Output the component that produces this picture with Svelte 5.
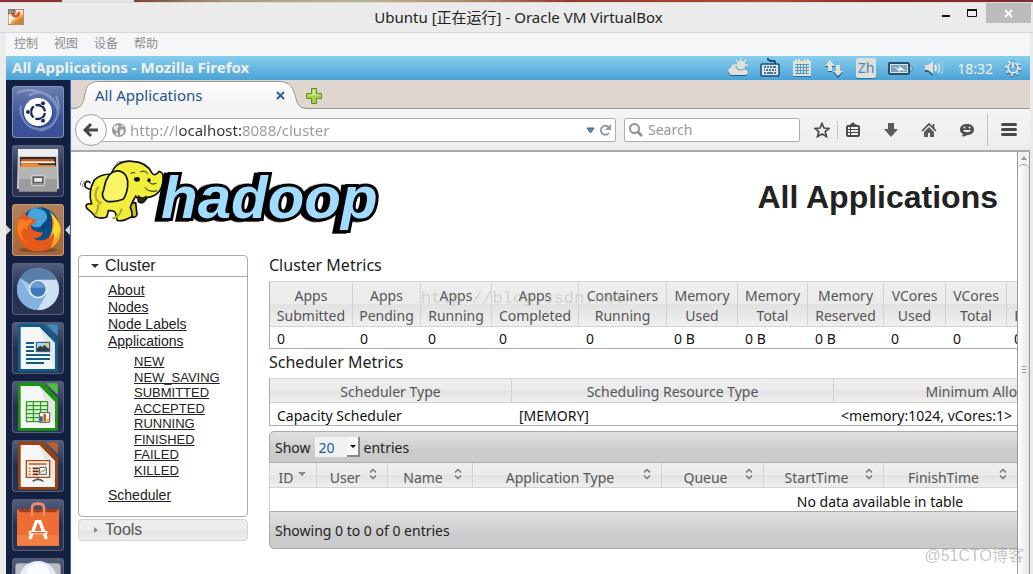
<script>
  const menus = ['控制', '视图', '设备', '帮助'];

  const clusterLinks = ['About', 'Nodes', 'Node Labels', 'Applications'];
  const appStates = ['NEW', 'NEW_SAVING', 'SUBMITTED', 'ACCEPTED', 'RUNNING', 'FINISHED', 'FAILED', 'KILLED'];

  const metrics = [
    { a: 'Apps', b: 'Submitted', v: '0', w: 83 },
    { a: 'Apps', b: 'Pending', v: '0', w: 68 },
    { a: 'Apps', b: 'Running', v: '0', w: 71 },
    { a: 'Apps', b: 'Completed', v: '0', w: 87 },
    { a: 'Containers', b: 'Running', v: '0', w: 88 },
    { a: 'Memory', b: 'Used', v: '0 B', w: 71 },
    { a: 'Memory', b: 'Total', v: '0 B', w: 70 },
    { a: 'Memory', b: 'Reserved', v: '0 B', w: 76 },
    { a: 'VCores', b: 'Used', v: '0', w: 62 },
    { a: 'VCores', b: 'Total', v: '0', w: 61 },
    { a: 'VCores', b: 'Reserved', v: '0', w: 76 }
  ];

  const scheduler = [
    { h: 'Scheduler Type', v: 'Capacity Scheduler', w: 242 },
    { h: 'Scheduling Resource Type', v: '[MEMORY]', w: 322 },
    { h: 'Minimum Allocation', v: '<memory:1024, vCores:1>', w: 316 }
  ];

  const columns = [
    { h: 'ID', w: 47, sorted: true },
    { h: 'User', w: 71 },
    { h: 'Name', w: 85 },
    { h: 'Application Type', w: 189 },
    { h: 'Queue', w: 102 },
    { h: 'StartTime', w: 120 },
    { h: 'FinishTime', w: 134 }
  ];

  let url = $state('http://localhost:8088/cluster');
  let query = $state('');
  let pageSize = $state('20');
</script>

<div class="host">
  <div class="wallpaper"></div>
  <header class="titlebar">
    <svg class="appicon" width="16" height="16" viewBox="0 0 48 48">
      <rect width="48" height="48" fill="#8a6a50" />
      <rect x="2" y="2" width="44" height="44" fill="#f3dcc0" />
      <path d="M2 18h18l4 6-10 20H2z" fill="#fbf3e6" />
      <path d="M8 46c0-12 6-12 14-16s10-12 24-14v12c-8 2-10 8-18 12-4 2-6 2-6 6z" fill="#f0a83a" />
      <path d="M16 46c2-8 14-8 20-18l10-6v24z" fill="#c98443" />
      <path d="M12 14c8 12 18 10 22-4" stroke="#e2501f" stroke-width="8" fill="none" />
      <path d="M2 2h20v12H2z" fill="#4b4640" />
      <path d="M5 5h4v6h-4zM13 4v8M18 4v8" stroke="#eee" stroke-width="2" fill="none" />
    </svg>
    <h1>Ubuntu [正在运行] - Oracle VM VirtualBox</h1>
    <div class="winbtns">
      <button aria-label="Minimize"><svg width="9" height="16" viewBox="0 0 9 16"><path d="M0 10h8v2H0z" fill="#111" /></svg></button>
      <button aria-label="Maximize"><svg width="12" height="16" viewBox="0 0 12 16"><path d="M.5 4.500h9v7h-9z" fill="none" stroke="#111" /><path d="M0 4h10v2H0z" fill="#111" /></svg></button>
      <button class="close" aria-label="Close"><svg width="9" height="9" viewBox="0 0 9 9"><path d="M1 1l7 7M8 1L1 8" stroke="#fff" stroke-width="2" /></svg></button>
    </div>
  </header>

  <div class="guest">
    <nav class="vmmenu">
      {#each menus as m}<button>{m}</button>{/each}
    </nav>

    <div class="panel">
      <strong>All Applications - Mozilla Firefox</strong>
      <div class="tray">
        <svg width="20" height="20" viewBox="0 0 20 20"><path d="M1 16a3 3 0 0 1 3-5h13c2 0 3 1 3 3s-1 4-3 4H3z" fill="#1d5c8c" /><path d="M1 15c-2-3 0-5 2-5 0-3 2-4 4-3 0 4 3 5 6 5 2-2 7-1 7 2 0 2-1 3-3 3H4c-2 0-2-1-3-2z" fill="#e3e0d8" /><circle cx="13" cy="7" r="5" fill="#e3e0d8" stroke="#5caedb" /><path d="M13 0v3M8 2l2 2M18 2l-2 2M17 7h3M6 7h3" stroke="#e3e0d8" stroke-width="1.500" /></svg>
        <svg width="20" height="20" viewBox="0 0 20 20"><path d="M15 6V4c0-1 0-1-1-1h-3c-2 0-2-2-4-2" fill="none" stroke="#174d78" stroke-width="2" /><rect x="1" y="6" width="18" height="12" rx="1" fill="#dfe5e6" stroke="#174d78" stroke-width="1.500" /><path d="M4 9h2m1 0h2m1 0h2m1 0h3M4 12h1m1 0h2m1 0h2m1 0h2m1 0h1M4 15h2m1 0h6m1 0h2" stroke="#174d78" stroke-width="1.500" /></svg>
        <svg width="20" height="20" viewBox="-1 0 20 20"><path d="M0 3h18v15H0z" fill="#e3e0d8" /><path d="M3 1v4M6 1v4M12 1v4M15 1v4" stroke="#e3e0d8" stroke-width="2" /><path d="M2 6.500h14M2 9.500h14M2 12.500h14M2 15.500h14" stroke="#4c9bca" /><path d="M4.500 7v9M7.500 7v9M10.500 7v9M13.500 7v9" stroke="#4c9bca" /><path d="M0 18.500h18" stroke="#2a76a8" /></svg>
        <svg width="20" height="20" viewBox="-1 0 20 20"><path d="M5 3l5 6H7v5H3V9H0zM11 9h4v5h3l-5 6-5-6h3z" fill="#1d5c8c" /><path d="M5 2l5 6H7v5H3V8H0zM11 7h4v6h3l-5 5-5-5h3z" fill="#e3e0d8" /></svg>
        <span class="ime">Zh</span>
        <svg width="25" height="20" viewBox="0 0 25 20"><rect x="1" y="5" width="20" height="11" rx="1" fill="#7aa6c4" stroke="#27506e" stroke-width="2" /><rect x="2.500" y="6.500" width="17" height="8" fill="none" stroke="#dde4e4" /><path d="M22 8h2v5h-2z" fill="#e3e0d8" stroke="#27506e" stroke-width=".5" /><path d="M5 8l6 3V8l7 5-6-1v2z" fill="#f3f0e8" /></svg>
        <svg width="20" height="20" viewBox="0 0 20 20"><path d="M0 8h3l5-4v13l-5-4H0z" fill="#1d5c8c" transform="translate(0 1)" /><path d="M0 7h3l5-4v13l-5-4H0z" fill="#e3e0d8" /><path d="M10 7q2 3 0 6" stroke="#f2f0e8" stroke-width="2" fill="none" /><path d="M13 5q3 5 0 10" stroke="#c5dbe6" stroke-width="2" fill="none" /><path d="M16 3q4 7 0 14" stroke="#9bc7df" stroke-width="1.500" fill="none" /></svg>
        <time>18:32</time>
        <svg width="16" height="20" viewBox="0 0 16 20"><g fill="none" stroke="#1d5c8c" transform="translate(0 1)"><circle cx="8" cy="10" r="5" stroke-width="2" /><circle cx="8" cy="10" r="7" stroke-width="2" stroke-dasharray="2 3.500" /></g><g fill="none" stroke="#e9e6de"><circle cx="8" cy="10" r="5" stroke-width="2" /><circle cx="8" cy="10" r="7" stroke-width="2" stroke-dasharray="2 3.500" /></g><path d="M8 2v8" stroke="#5cb0dc" stroke-width="4" /><path d="M8 4v6" stroke="#e9e6de" stroke-width="2" /></svg>
      </div>
    </div>

    <div class="desktop">
      <nav class="launcher" aria-label="Launcher">
        <button class="tile dash" aria-label="Dash">
          <svg viewBox="0 0 156 156"><g fill="none" stroke="#aebcdc" stroke-width="7" opacity=".5"><path d="M16 20C60 0 130 20 138 80M132 30c20 40 0 100-50 104M120 118C70 150 20 110 26 60M50 28c40-20 70 0 84 30" /></g><circle cx="78" cy="80" r="44" fill="#233b78" opacity=".5" /><circle cx="78" cy="78" r="42" fill="#fff" /><circle cx="78" cy="78" r="21" fill="none" stroke="#1c2852" stroke-width="7" stroke-dasharray="38 6" stroke-dashoffset="-3" /><g fill="#1c2852" stroke="#fff" stroke-width="2"><circle cx="48" cy="78" r="7" /><circle cx="93" cy="52" r="7" /><circle cx="93" cy="104" r="7" /></g></svg>
        </button>
        <button class="tile" aria-label="Files">
          <svg viewBox="0 0 156 156"><path d="M18 12h120l3 120H15z" fill="#c9c9c9" /><path d="M18 12h120v22H18z" fill="#ededed" /><path d="M24 36h108v28H24z" fill="#2d2d2d" /><path d="M28 42h98v8H28z" fill="#c85b1d" /><path d="M26 49h102v6H26z" fill="#f5ead6" /><path d="M26 55h50l6 5h46v6H26z" fill="#ee8a36" /><path d="M21 66h114v74H21z" fill="#9c9c9c" /><path d="M21 66h114v36H21z" fill="#b5b5b5" /><rect x="58" y="91" width="40" height="31" rx="3" fill="#8f8f8f" stroke="#d9d9d9" stroke-width="3" /><rect x="65" y="97" width="27" height="15" fill="#eee" stroke="#444" stroke-width="3" /></svg>
        </button>
        <button class="tile active" aria-label="Firefox">
          <svg viewBox="0 0 156 156"><ellipse cx="78" cy="138" rx="58" ry="7" fill="#5e3515" opacity=".5" /><circle cx="82" cy="68" r="58" fill="#0d4e8b" /><circle cx="76" cy="40" r="30" fill="#45a5db" /><path d="M70 12c28 4 44 18 34 34s-24 18-16 34l34-16C130 36 104 10 70 12z" fill="#0a4680" /><path d="M118 28c18 18 28 36 28 52-2 38-32 62-68 62-38 0-66-28-66-64 0-18 4-30 10-40l2 8 6-8c0-6 2-8 2-13 8 4 12 8 14 14 8 0 12 2 14 6l14 1c-2 9-8 13-16 16-3 8 1 16 14 20 10 2 14 6 20 2 0 12-14 20-28 18 14 12 40 10 52-8 8-16 4-36 2-66z" fill="#e5591b" /><path d="M112 22c22 20 34 40 34 58-2 22-12 40-30 52 10-20 12-34 8-48l-10 20c2-16 12-28 8-46l4 8c0-18-6-30-14-44z" fill="#ffd62e" /><path d="M18 52c8-8 16-8 24 0 6-6 12-6 20-5l-6 10c-8 3-12 10-10 18-20-8-26 22 2 42-30-10-38-40-30-65z" fill="#f47d22" /><path d="M116 132c26-16 30-34 28-52l-8 24-4-10z" fill="#f6a623" /></svg>
        </button>
        <button class="tile" aria-label="Chromium">
          <svg viewBox="0 0 156 156"><circle cx="78" cy="78" r="63" fill="#8ab4de" /><path d="M78 78L24 46C44 6 112 2 134 48z" fill="#5880aa" /><path d="M78 50h56c22 44-10 92-58 91l28-48z" fill="#cddff1" /><path d="M24 46c-24 44 2 92 52 95l26-48H54z" fill="#86b1df" /><path d="M24 46l28 48 20-18-20-12z" fill="#a6c7eb" /><circle cx="78" cy="78" r="28" fill="#e6f0fa" /><circle cx="78" cy="78" r="23" fill="#3f78be" /><path d="M56 74a23 23 0 0 1 44 0z" fill="#6b9cd6" /></svg>
        </button>
        {#each [{ n: 'Writer', c: '#0f5c8c', l: '#3a8dc0' }, { n: 'Calc', c: '#1c9411', l: '#55bb41' }, { n: 'Impress', c: '#97420f', l: '#b8622e' }] as doc}
          <button class="tile" aria-label={doc.n}>
            <svg viewBox="0 0 156 156">
              <path d="M24 5h68l46 48v90c0 4-2 6-6 6H24c-4 0-6-2-6-6V11c0-4 2-6 6-6z" fill={doc.c} />
              <path d="M102 7h30c4 0 5 2 5 5v30z" fill={doc.l} />
              <path d="M26 15h56l47 48v78H26z" fill="#f6f6f6" />
              <path d="M82 15l47 48v78z" fill="#dadada" opacity=".6" />
              {#if doc.n === 'Writer'}
                <path d="M42 63h24M42 75h24M42 87h24M42 99h72M42 111h72M42 123h54" stroke={doc.c} stroke-width="6" />
                <path d="M73 61h40v28H73z" fill="#a6d4f2" stroke="#174d70" stroke-width="3" /><path d="M75 87V79l10-8 6 5 6-8 6 7 8 5v7z" fill="#333c38" /><circle cx="106" cy="67" r="5" fill="#f7c532" />
              {:else if doc.n === 'Calc'}
                <path d="M43 62h64v60H43z" fill="#d5f2cd" /><path d="M43 62h64v60H43zM43 74h64M43 86h64M43 98h64M43 110h64M64 62v60M86 62v60" fill="none" stroke="#188a10" stroke-width="3" /><path d="M82 95h31v29H82z" fill="#fff" stroke="#555" stroke-width="3" /><path d="M88 122v-16" stroke="#1f68a5" stroke-width="8" /><path d="M98 122V99" stroke="#e05a1a" stroke-width="8" /><path d="M107 122v-9" stroke="#f0bd22" stroke-width="8" />
              {:else}
                <path d="M43 62h70v50H43z" fill="#fdf1ea" stroke="#a64a13" stroke-width="4" /><path d="M50 72h54" stroke="#cc6128" stroke-width="5" /><path d="M50 85h6M50 94h6M50 103h6" stroke="#e0732f" stroke-width="5" /><path d="M62 85h18M62 94h18M62 103h18" stroke="#6b2c0a" stroke-width="5" /><path d="M83 82h20v21H83z" fill="#fff" stroke="#555" stroke-width="3" /><path d="M86 98l5-6 4 2 6-8" fill="none" stroke="#249522" stroke-width="3" /><path d="M78 112v6M62 124q16-12 32 0" fill="none" stroke="#5c5c5c" stroke-width="5" />
              {/if}
            </svg>
          </button>
        {/each}
        <button class="tile" aria-label="Software Center">
          <svg viewBox="0 0 156 156"><path d="M15 30h126v20H15z" fill="#a33f1c" /><path d="M15 30l10 10H131l10-10v110H15z" fill="#ef6c33" /><path d="M15 108h126v32H15z" fill="#f57f43" /><path d="M60 50V26q0-12 18-12t18 12v24" fill="none" stroke="#f08c67" stroke-width="8" /><path d="M54 120l19-52h11l19 52M50 101h56" fill="none" stroke="#fff" stroke-width="10" /><path d="M56 101h44" stroke="#e9601f" stroke-width="4" /></svg>
        </button>
        <button class="tile" aria-label="Disk">
          <svg viewBox="0 0 156 156"><rect x="10" y="16" width="136" height="130" rx="10" fill="#b8bcc0" /><circle cx="78" cy="66" r="57" fill="#e3eef8" /><circle cx="78" cy="50" r="36" fill="#f8fcff" /></svg>
        </button>
      </nav>

      <main class="firefox">
        <div class="tabstrip">
          <div class="tab">
            <svg class="tabshape" width="240" height="30" viewBox="0 0 240 30"><defs><linearGradient id="tg" x2="0" y2="1"><stop offset="0" stop-color="#fcfcfc" /><stop offset="1" stop-color="#f3f3f3" /></linearGradient></defs><path d="M0 30v-1c8 0 11-2 13-10C15 8 16 1 28 1h180c11 0 14 6 17 17 2 8 4 11 15 11v1z" fill="url(#tg)" /><path d="M0 28.500c8 0 11-2 13-9.500C15 8 16 1.500 28 1.500h180c11 0 14 6 17 17 2 8 4 10 15 10" fill="none" stroke="#98958c" /></svg>
            <span>All Applications</span>
            <button aria-label="Close tab"><svg width="9" height="9" viewBox="0 0 9 9"><path d="M1 1l7 7M8 1L1 8" stroke="#2c639a" stroke-width="2" /></svg></button>
          </div>
          <button class="newtab" aria-label="New tab"><svg width="16" height="16" viewBox="0 0 16 16"><path d="M5.500.5h5v5h5v5h-5v5h-5v-5h-5v-5h5z" fill="#a8cf45" stroke="#5d8d26" /><path d="M6.500 1.500h3v5h5v1h-13v-1h5z" fill="#d2e68c" /></svg></button>
        </div>

        <div class="toolbar">
          <button class="back" aria-label="Back"><svg width="16" height="16" viewBox="0 0 16 16"><path d="M8 2L2 8l6 6M3 8h12" fill="none" stroke="#454545" stroke-width="3" /></svg></button>
          <div class="urlbox">
            <svg width="14" height="14" viewBox="0 0 14 14"><circle cx="7" cy="7" r="7" fill="#9c9c9c" /><path d="M2 3l4-1 1 2-2 1 1 2-2 1-2-2zM8 7l3-1 1 3-2 3H8zM9 1l3 2-2 1zM4 9l2 1v3l-2-1z" fill="#ececec" /></svg>
            <input aria-label="Address" bind:value={url} />
            <svg width="9" height="8" viewBox="0 0 9 8"><path d="M1 2h7L4.500 7z" fill="#5b8ab8" stroke="#36648f" /></svg>
            <button aria-label="Reload"><svg width="12" height="12" viewBox="0 0 12 12"><path d="M9.500 3A4.500 4.500 0 1 0 10 9" fill="none" stroke="#8f9caa" stroke-width="2" /><path d="M12 0v6H6z" fill="#8f9caa" /></svg></button>
          </div>
          <div class="searchbox">
            <svg width="14" height="15" viewBox="0 0 14 15"><circle cx="5.500" cy="5.500" r="4.500" fill="none" stroke="#929292" stroke-width="2" /><path d="M9 9l4 4" stroke="#929292" stroke-width="3" /></svg>
            <input aria-label="Search" placeholder="Search" bind:value={query} />
          </div>
          <button class="tool star" aria-label="Bookmark"><svg width="16" height="16" viewBox="0 0 16 16"><path d="M8 1.500l2 4.500 5 .4-3.800 3.200 1.300 5L8 12l-4.500 2.600 1.300-5L1 6.400 6 6z" fill="none" stroke="#4a4a4a" stroke-width="1.700" /></svg></button>
          <i class="sep short"></i>
          <button class="tool" aria-label="Bookmarks list"><svg width="16" height="16" viewBox="0 0 16 16"><path d="M4 3l2-1 2-2 2 2 2 1z" fill="#4a4a4a" /><rect x="2" y="4" width="12" height="10" rx="1" fill="none" stroke="#4a4a4a" stroke-width="2" /><path d="M2 7.500h12M2 10.500h12" stroke="#4a4a4a" /><path d="M5.500 4v10" stroke="#4a4a4a" /></svg></button>
          <button class="tool" aria-label="Downloads"><svg width="16" height="16" viewBox="0 0 16 16"><path d="M5 1h6v6h4l-7 8-7-8h4z" fill="#5b5b5b" /></svg></button>
          <button class="tool" aria-label="Home"><svg width="16" height="16" viewBox="0 0 16 16"><path d="M1 9l7-7 7 7M12.500 2v4" fill="none" stroke="#4a4a4a" stroke-width="1.700" /><path d="M8 5l5 5v5H9v-4H7v4H3v-5z" fill="#5b5b5b" /></svg></button>
          <button class="tool" aria-label="Chat"><svg width="16" height="16" viewBox="0 0 16 16"><path d="M8 2c4 0 7 2 7 5.500S12 13 8 13c-1 1-3 2-6 1 1 0 2-1 2-2-2-1-3-2-3-4.500C1 4 4 2 8 2z" fill="#4f4f4f" /><circle cx="5.500" cy="5.500" r="1" fill="#eee" /><circle cx="10.500" cy="5.500" r="1" fill="#eee" /><path d="M4 8h8c-1 3-7 3-8 0z" fill="#eee" /></svg></button>
          <i class="sep"></i>
          <button class="tool" aria-label="Menu"><svg width="16" height="16" viewBox="0 0 16 16"><path d="M1.500 2.500h13M1.500 7.500h13M1.500 12.500h13" stroke="#484848" stroke-width="3" stroke-linecap="round" /></svg></button>
        </div>

        <div class="viewport">
          <div class="page">
            <div class="banner">
              <svg class="logo" width="307" height="80" viewBox="9 6 921 240" role="img" aria-label="hadoop">
                <g fill="#f2ee3d" stroke="#111" stroke-width="5" stroke-linejoin="round">
                  <path d="M50 118c-10 0-22-4-20-16 2-10 14-10 16-2" fill="none" />
                  <path d="M158 160l6 38c8 6 20 4 22-4l-4-36z" fill="#c9c425" />
                  <path d="M58 90C72 76 90 72 110 72c4-24 30-42 62-38 30 2 48 12 58 34 6 10 16 6 22-4 6 2 12 8 12 14 4 34-14 60-46 64l-10 12c-8 8-20 4-18-6l-8-10c-6 12-12 20-16 34 4 10 8 20 4 28-14 8-28 14-42 12-6-6-2-14-8-26-6-6-14-4-20-4-2 10-2 14-6 20-12 4-24 2-34-2-4-10-14-16-24-24-8-14 4-16 14-14-8-22-4-50 8-72z" />
                  <path d="M110 68c22-12 44-2 48 26 2 22-6 46-14 54-10 4-32 8-48 6-16-8-16-24-10-34 4-20 8-40 24-52z" fill="#f7f466" />
                  <path d="M190 136c6 10 16 8 24 2l-4 14c-6 10-20 6-20-4z" fill="#2b2509" stroke-width="3" />
                  <path d="M220 92c4 10 14 12 24 8M210 112c8 12 22 14 36 10M168 72c2-6 8-6 12-2M218 72c-4-10-16-10-22-6" fill="none" stroke-width="3" />
                </g>
                <path d="M60 196c8-12 10-20 10-34M112 206c14-4 24-14 28-30M70 110c-14 22-10 44 10 50" stroke="#b5b02b" stroke-width="7" fill="none" />
                <ellipse cx="186" cy="88" rx="9" ry="7" fill="#111" />
                <ellipse cx="222" cy="91" rx="5" ry="6" fill="#111" />
                <path d="M16 106q-2-8 6-14M24 112q-4-8 4-18M124 46q0-10 10-12M130 40q4-6 12-6" stroke="#777" stroke-width="3" fill="none" />
                <text class="wordmark" x="258" y="203">hadoop</text>
              </svg>
              <h2>All Applications</h2>
            </div>

            <div class="cols">
              <aside>
                <section class="box">
                  <h3><svg width="8" height="4" viewBox="0 0 8 4"><path d="M0 0h8L4 4z" fill="#333" /></svg>Cluster</h3>
                  <ul class="links">
                    {#each clusterLinks as l}<li><a href="#{l}">{l}</a></li>{/each}
                  </ul>
                  <ul class="states">
                    {#each appStates as s}<li><a href="#{s}">{s}</a></li>{/each}
                  </ul>
                  <ul class="links last"><li><a href="#scheduler">Scheduler</a></li></ul>
                </section>
                <h3 class="tools"><svg width="8" height="8" viewBox="0 0 8 8"><path d="M3 1l4 3-4 3z" fill="#888" /></svg>Tools</h3>
              </aside>

              <div class="content">
                <h4>Cluster Metrics</h4>
                <table class="metrics">
                  <colgroup>{#each metrics as m}<col style="width:{m.w}px" />{/each}<col /></colgroup>
                  <thead><tr>{#each metrics as m}<th>{m.a}<br />{m.b}</th>{/each}<th></th></tr></thead>
                  <tbody><tr>{#each metrics as m}<td>{m.v}</td>{/each}<td></td></tr></tbody>
                </table>
                <h4>Scheduler Metrics</h4>
                <table>
                  <colgroup>{#each scheduler as s}<col style="width:{s.w}px" />{/each}<col /></colgroup>
                  <thead><tr>{#each scheduler as s}<th>{s.h}</th>{/each}<th></th></tr></thead>
                  <tbody><tr>{#each scheduler as s}<td>{s.v}</td>{/each}<td></td></tr></tbody>
                </table>
                <div class="bar top">
                  <label for="size">Show</label>
                  <span class="select">
                    <select id="size" bind:value={pageSize}><option>20</option><option>40</option><option>60</option></select>
                    <i></i>
                  </span>
                  <span>entries</span>
                </div>
                <table class="apps">
                  <colgroup>{#each columns as c}<col style="width:{c.w}px" />{/each}<col /></colgroup>
                  <thead><tr>
                    {#each columns as c}
                      <th><div><span>{c.h}</span>
                        {#if c.sorted}
                          <svg width="8" height="12" viewBox="0 0 8 12"><path d="M0 3h8L4 7z" fill="#888" /></svg>
                        {:else}
                          <svg width="8" height="12" viewBox="0 0 8 12"><path d="M1 3.500l3-3 3 3M1 6.500l3 3 3-3" fill="none" stroke="#777" stroke-width="1.500" /></svg>
                        {/if}
                      </div></th>
                    {/each}
                    <th></th>
                  </tr></thead>
                  <tbody><tr><td colspan="8">No data available in table</td></tr></tbody>
                </table>
                <div class="bar bottom">Showing 0 to 0 of 0 entries</div>
              </div>
            </div>
          </div>
          <div class="scroll">
            <div class="up"><svg width="6" height="4" viewBox="0 0 6 4"><path d="M0 4h6L3 0z" fill="#999" /></svg></div>
            <div class="thumb"><svg width="4" height="8" viewBox="0 0 4 8"><path d="M0 .5h4M0 3.500h4M0 6.500h4" stroke="#999" /></svg></div>
          </div>
        </div>
      </main>
    </div>
  </div>
  <span class="mark blog">http://blog.csdn.net/</span>
  <span class="mark site">@51CTO博客</span>
</div>

<style>
  :global(body) { margin: 0; overflow: hidden; }
  .host {
    position: relative; display: flex; flex-direction: column; height: 100vh; overflow: hidden;
    background: #ebebeb; color: #222; font-family: "Noto Sans", "Noto Sans CJK SC", sans-serif; font-size: 14px;
  }
  button { padding: 0; border: 0; background: none; font: inherit; color: inherit; display: flex; align-items: center; justify-content: center; }
  svg { display: block; flex: none; }
  h1, h2, h3, h4, ul { margin: 0; padding: 0; font-weight: normal; list-style: none; }

  .wallpaper { flex: none; height: 2px; background: linear-gradient(90deg, #8a2f33 0 6%, #dfe4ea 6% 13%, #7c4038 13%, #a59a78 22%, #b7b58c 35%, #b08b68 45%, #963a28 55%, #b04a30 75%, #8e2420 85%, #7b2c36); }
  .titlebar { flex: none; display: grid; grid-template-columns: 104px 1fr 100px; align-items: start; height: 31px; box-sizing: border-box; border-bottom: 1px solid #d5d7da; border-top: 1px solid #dcdcd8; }
  .appicon { margin: 6px 0 0 8px; }
  h1 { text-align: center; font: 15px/29px "Noto Sans", "Noto Sans CJK SC", sans-serif; color: #222; }
  .winbtns { display: flex; justify-content: flex-end; margin-right: 2px; gap: 16px; }
  .winbtns button { height: 20px; }
  .winbtns .close { width: 45px; background: #bcbcbc; margin-left: -9px; }

  .guest { flex: 1; min-height: 0; display: flex; flex-direction: column; margin: 0 3px 0 6px; }
  .vmmenu { flex: none; display: flex; align-items: flex-start; gap: 16px; height: 23px; padding: 0 8px; background: #f5f6f8; color: #8d8d8d; font: 12px/20px "Noto Sans CJK SC", sans-serif; }
  .panel { flex: none; display: flex; align-items: center; justify-content: space-between; height: 24px; padding: 0 9px 0 6px; background: linear-gradient(#87cdef, #4aa3d6); color: #f1efe9; }
  .panel strong { font-size: 15px; line-height: 22px; padding-bottom: 2px; }
  .tray { display: flex; align-items: center; gap: 12px; }
  .ime { width: 20px; height: 20px; border-radius: 2px; background: #e0ded8; color: #3d8cc0; text-align: center; line-height: 20px; box-shadow: 0 1px #2a76a8; }

  .desktop { flex: 1; min-height: 0; display: flex; }
  .launcher { flex: none; display: flex; flex-direction: column; gap: 7px; width: 52px; padding: 6px; overflow: hidden; background: #13203f; border-right: 1px solid #3a62cc; position: relative; }
  .tile { flex: none; width: 52px; height: 52px; border-radius: 4px; background: linear-gradient(#535f7c, #26304e 50%, #2a3452); box-shadow: inset 0 0 0 1px #56607c; }
  .tile svg { width: 52px; height: 52px; }
  .dash { background: linear-gradient(#6c7fae, #3c549b 60%, #3a4f94); box-shadow: inset 0 0 0 1px #7f90bd; }
  .active { background: linear-gradient(#b5825c, #a1663a); box-shadow: inset 0 0 0 1px #c39a78; }
  .active::before, .active::after { content: ""; position: absolute; border: 5px solid transparent; }
  .active::before { left: 0; border-left-color: #d5d7da; border-right: 0; }
  .active::after { right: 0; border-right-color: #d5d7da; border-left: 0; }

  .firefox { flex: 1; min-width: 0; display: flex; flex-direction: column; background: #f2f2f2; }
  .tabstrip { flex: none; display: flex; height: 30px; background: linear-gradient(#dfd6d0 28px, #98958c 28px 29px, #f4f4f4 29px); }
  .tab { position: relative; display: flex; align-items: center; justify-content: space-between; width: 190px; padding: 0 26px 0 24px; color: #1f5291; font-size: 15px; }
  .tab span, .tab button { position: relative; }
  .tabshape { position: absolute; left: 0; top: 0; }
  .newtab { margin-left: -5px; padding-top: 2px; }
  .toolbar { flex: none; display: flex; align-items: center; height: 42px; box-sizing: border-box; padding: 0 11px 0 4px; border-bottom: 2px solid #aaa; background: linear-gradient(#f4f4f4, #ededed); }
  .back { position: relative; flex: none; width: 32px; height: 32px; box-sizing: border-box; border: 1px solid #9aa3ab; border-radius: 50%; background: #fafafa; }
  .urlbox, .searchbox { display: flex; align-items: center; box-sizing: border-box; height: 24px; border: 1px solid #b0b0aa; border-radius: 2px; background: #fff; }
  .urlbox { flex: 1; min-width: 0; margin-left: -17px; padding: 0 4px 0 21px; gap: 4px; }
  .searchbox { flex: 0 1 176px; min-width: 0; margin: 0 12px 0 8px; padding: 0 4px; gap: 5px; }
  input { flex: 1; min-width: 0; padding: 0; border: 0; outline: 0; background: none; font: 14px/22px "Noto Sans", sans-serif; color: #444; }
  input::placeholder { color: #999; opacity: 1; }
  .urlbox input { font-size: 15px; color: transparent; caret-color: #222; background: linear-gradient(90deg, #999 48px, #333 48px 113px, #999 113px); background-clip: text; -webkit-background-clip: text; }
  .tool { flex: none; width: 20px; height: 24px; margin-right: 18px; }
  .tool:last-child { margin-right: 0; }
  .star { margin-right: 5px; }
  .sep { flex: none; width: 1px; height: 32px; background: #c0c4ca; margin: 0 11px 0 -8px; }
  .short { height: 18px; margin: 0 5px 0 0; }

  .viewport { flex: 1; min-height: 0; display: flex; }
  .page { flex: 1; min-width: 0; overflow: hidden; background: #fff; }
  .banner { display: flex; justify-content: space-between; height: 103px; padding: 0 19px 0 7px; }
  .logo { overflow: visible; }
  .wordmark { font: italic bold 180px "Liberation Sans", Arial, sans-serif; fill: #9fdcff; stroke: #000; stroke-width: 18px; stroke-linejoin: miter; paint-order: stroke; filter: drop-shadow(-12px 2px 0 #000); }
  h2 { font: bold 32px/90px "Liberation Sans", Arial, sans-serif; color: #222; white-space: nowrap; }
  .cols { display: flex; gap: 21px; padding-left: 7px; }
  aside { flex: none; width: 170px; font-family: "Liberation Sans", Arial, sans-serif; }
  .box { border: 1px solid #aaa; border-radius: 4px; padding-bottom: 12px; }
  h3 { display: flex; align-items: center; gap: 6px; height: 20px; padding-left: 12px; font-size: 16px; border-bottom: 1px solid #aaa; }
  .tools { margin-top: 2px; border: 1px solid #d3d3d3; border-radius: 4px; color: #555; background: linear-gradient(#ededed 49%, #e4e4e4 51%, #ededed); }
  aside a { color: #222; }
  .links { padding: 5px 0 0 29px; font-size: 14px; line-height: 17px; }
  .last { padding-top: 9px; }
  .states { display: grid; align-content: space-between; height: 124px; padding: 4px 0 0 55px; font-size: 13px; line-height: 15px; }
  .content { flex: 1; min-width: 0; }
  h4 { font-size: 16px; line-height: 20px; margin-bottom: 6px; white-space: nowrap; }
  table { width: 1221px; table-layout: fixed; border-collapse: separate; border-spacing: 0; border: 1px solid #aaa; border-top-color: #d3d3d3; margin-bottom: 3px; color: #111; }
  th { padding: 2px 8px 0; box-sizing: border-box; height: 24px; font-weight: normal; color: #555; line-height: 20px; border-right: 1px solid #d3d3d3; border-bottom: 1px solid #d3d3d3; background: linear-gradient(#eee, #ebebeb 49%, #e2e2e2 51%, #efefef); white-space: nowrap; }
  td { padding: 4px 7px 0; height: 18px; line-height: 18px; white-space: nowrap; }
  .metrics th { padding: 4px 4px 0; height: 44px; }
  .metrics td { padding-top: 3px; }
  .bar { display: flex; align-items: center; width: 1221px; box-sizing: border-box; padding: 0 5px; border: 1px solid #aaa; background: linear-gradient(#e1e1e1, #cbcbcb 65%, #cbcbcb); color: #222; }
  .top { height: 32px; margin-top: 5px; border-radius: 5px 5px 0 0; gap: 4px; }
  .bottom { height: 38px; border-radius: 0 0 5px 5px; }
  .apps { border: 0; border-left: 1px solid #d3d3d3; margin: 0; }
  .apps th { height: 25px; padding: 6px 10px 0 4px; line-height: 18px; }
  .apps th div { display: flex; justify-content: space-between; }
  .apps th span { flex: 1; }
  .apps td { text-align: center; padding: 5px 0 0; }
  .select { position: relative; display: flex; width: 45px; height: 20px; }
  select { appearance: none; width: 100%; padding: 0 4px; border: 0; border-radius: 0; background: #f2f2f2; color: #15599b; font: inherit; }
  .select i { position: absolute; right: 0; top: 0; width: 11px; height: 18px; border: solid #888; border-width: 0 2px 2px 0; background: #f8f8f8; pointer-events: none; }
  .select i::after { content: ""; position: absolute; left: 3px; top: 8px; border: 3px solid transparent; border-top-color: #000; border-bottom: 0; }

  .scroll { flex: none; width: 13px; box-sizing: border-box; display: flex; flex-direction: column; border: solid #999; border-width: 0 1px; background: #f2f2f2; }
  .up { display: flex; align-items: center; justify-content: center; height: 12px; }
  .thumb { flex: 1; display: flex; align-items: center; justify-content: center; border-top: 1px solid #999; border-radius: 6px 6px 0 0; background: linear-gradient(90deg, #fff, #e4e4e4); }

  .mark { position: absolute; pointer-events: none; white-space: nowrap; }
  .blog { left: 421px; top: 289px; font: 17px/20px "Liberation Mono", monospace; color: rgb(160 160 140 / 35%); }
  .site { right: 9px; bottom: 7px; font: 16px/22px "Liberation Sans", "Noto Sans CJK SC", sans-serif; color: rgb(150 150 150 / 55%); }
</style>
